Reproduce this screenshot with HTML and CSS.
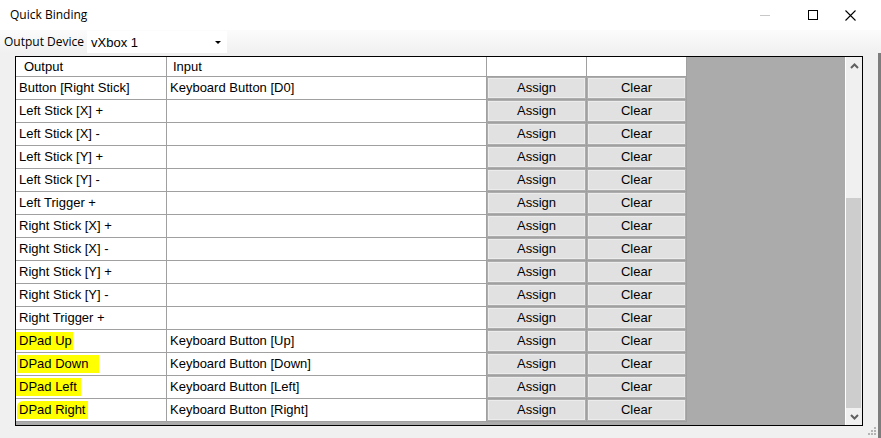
FILE: index.html
```html
<!DOCTYPE html>
<html>
<head>
<meta charset="utf-8">
<link rel="stylesheet" href="styles.css">
</head>
<body>
<div class="window">
  <div class="titlebar">
    <span class="title">Quick Binding</span>
    <div class="controls">
      <span class="ctl min"><span class="min-line"></span></span>
      <span class="ctl max"><span class="max-box"></span></span>
      <span class="ctl close">
        <svg width="11" height="11" viewBox="0 0 11 11"><path d="M0.5 0.5L10.5 10.5M10.5 0.5L0.5 10.5" stroke="#000" stroke-width="1.1" fill="none"/></svg>
      </span>
    </div>
  </div>
  <div class="toolbar">
    <span class="label">Output Device</span>
    <div class="combo"><span class="combo-text">vXbox 1</span><span class="combo-arrow"></span></div>
  </div>
  <div class="content">
    <div class="frame">
      <div class="view">
        <div class="grid">
          <div class="hd first">Output</div>
          <div class="hd">Input</div>
          <div class="hd"></div>
          <div class="hd"></div>

          <div class="cell">Button [Right Stick]</div><div class="cell">Keyboard Button [D0]</div><div class="bcell"><button class="btn">Assign</button></div><div class="bcell"><button class="btn">Clear</button></div>
          <div class="cell">Left Stick [X] +</div><div class="cell"></div><div class="bcell"><button class="btn">Assign</button></div><div class="bcell"><button class="btn">Clear</button></div>
          <div class="cell">Left Stick [X] -</div><div class="cell"></div><div class="bcell"><button class="btn">Assign</button></div><div class="bcell"><button class="btn">Clear</button></div>
          <div class="cell">Left Stick [Y] +</div><div class="cell"></div><div class="bcell"><button class="btn">Assign</button></div><div class="bcell"><button class="btn">Clear</button></div>
          <div class="cell">Left Stick [Y] -</div><div class="cell"></div><div class="bcell"><button class="btn">Assign</button></div><div class="bcell"><button class="btn">Clear</button></div>
          <div class="cell">Left Trigger +</div><div class="cell"></div><div class="bcell"><button class="btn">Assign</button></div><div class="bcell"><button class="btn">Clear</button></div>
          <div class="cell">Right Stick [X] +</div><div class="cell"></div><div class="bcell"><button class="btn">Assign</button></div><div class="bcell"><button class="btn">Clear</button></div>
          <div class="cell">Right Stick [X] -</div><div class="cell"></div><div class="bcell"><button class="btn">Assign</button></div><div class="bcell"><button class="btn">Clear</button></div>
          <div class="cell">Right Stick [Y] +</div><div class="cell"></div><div class="bcell"><button class="btn">Assign</button></div><div class="bcell"><button class="btn">Clear</button></div>
          <div class="cell">Right Stick [Y] -</div><div class="cell"></div><div class="bcell"><button class="btn">Assign</button></div><div class="bcell"><button class="btn">Clear</button></div>
          <div class="cell">Right Trigger +</div><div class="cell"></div><div class="bcell"><button class="btn">Assign</button></div><div class="bcell"><button class="btn">Clear</button></div>
          <div class="cell"><span class="hl hl-up">DPad Up</span></div><div class="cell">Keyboard Button [Up]</div><div class="bcell"><button class="btn">Assign</button></div><div class="bcell"><button class="btn">Clear</button></div>
          <div class="cell"><span class="hl hl-down">DPad Down</span></div><div class="cell">Keyboard Button [Down]</div><div class="bcell"><button class="btn">Assign</button></div><div class="bcell"><button class="btn">Clear</button></div>
          <div class="cell"><span class="hl hl-left">DPad Left</span></div><div class="cell">Keyboard Button [Left]</div><div class="bcell"><button class="btn">Assign</button></div><div class="bcell"><button class="btn">Clear</button></div>
          <div class="cell"><span class="hl hl-right">DPad Right</span></div><div class="cell">Keyboard Button [Right]</div><div class="bcell"><button class="btn">Assign</button></div><div class="bcell"><button class="btn">Clear</button></div>
        </div>
      </div>
      <div class="scrollbar">
        <div class="sb-btn">
          <svg width="9" height="6" viewBox="0 0 9 6"><path d="M1 5L4.5 1.5L8 5" stroke="#606060" stroke-width="2" fill="none"/></svg>
        </div>
        <div class="sb-track"><div class="sb-thumb"></div></div>
        <div class="sb-btn">
          <svg width="9" height="6" viewBox="0 0 9 6"><path d="M1 1L4.5 4.5L8 1" stroke="#606060" stroke-width="2" fill="none"/></svg>
        </div>
      </div>
    </div>
    <div class="footer">
      <svg class="grip" width="9" height="9" viewBox="0 0 9 9">
        <rect x="6" y="0" width="2" height="2" fill="#b4b4b4"/>
        <rect x="3" y="3" width="2" height="2" fill="#b4b4b4"/>
        <rect x="6" y="3" width="2" height="2" fill="#b4b4b4"/>
        <rect x="0" y="6" width="2" height="2" fill="#b4b4b4"/>
        <rect x="3" y="6" width="2" height="2" fill="#b4b4b4"/>
        <rect x="6" y="6" width="2" height="2" fill="#b4b4b4"/>
      </svg>
    </div>
  </div>
</div>
</body>
</html>
```
FILE: styles.css
```css
html, body {
  margin: 0;
  padding: 0;
  background: #f0f0f0;
}
body {
  width: 881px;
  height: 438px;
  overflow: hidden;
  font-family: "Liberation Sans", Arial, sans-serif;
  font-size: 13px;
  color: #000;
}
.window {
  display: flex;
  flex-direction: column;
  height: 438px;
}
.titlebar {
  height: 30px;
  background: #fff;
  display: flex;
  align-items: center;
  justify-content: space-between;
}
.title {
  font-family: "Open Sans", "Noto Sans", sans-serif;
  font-size: 12px;
  padding-left: 10px;
  margin-top: -1px;
}
.controls {
  display: flex;
  height: 30px;
  align-items: center;
}
.ctl {
  width: 46px;
  height: 30px;
  display: flex;
  align-items: center;
  justify-content: center;
}
.min-line {
  width: 10px;
  height: 1px;
  background: #c8c8c8;
  margin-left: 6px;
}
.max-box {
  width: 8px;
  height: 8px;
  border: 1px solid #000;
  margin-left: 10px;
}
.close {
  margin-left: 4px;
  margin-right: 16px;
  width: 30px;
}
.toolbar {
  height: 23px;
  display: flex;
  align-items: flex-start;
  background: linear-gradient(#fcfcfc, #f0f0f0);
}
.label {
  font-family: "Open Sans", "Noto Sans", sans-serif;
  font-size: 12px;
  padding-left: 4px;
  line-height: 22px;
  margin-top: 1px;
  width: 83px;
}
.combo {
  margin-top: 1px;
  width: 140px;
  height: 22px;
  background: #fff;
  display: flex;
  align-items: center;
  justify-content: space-between;
}
.combo-text {
  padding-left: 4px;
}
.combo-arrow {
  width: 0;
  height: 0;
  border-left: 3px solid transparent;
  border-right: 3px solid transparent;
  border-top: 3px solid #000;
  margin-right: 6px;
}
.content {
  flex: 1;
  border-right: 3px solid #7d7d7d;
  padding: 3px 0 0 15px;
  display: flex;
  flex-direction: column;
}
.frame {
  width: 846px;
  height: 368px;
  border: 1px solid #000;
  display: flex;
}
.view {
  flex: 1;
  background: #ababab;
  overflow: hidden;
}
.grid {
  display: grid;
  grid-template-columns: 150px 319px 99px 99px;
  grid-template-rows: 19px;
  grid-auto-rows: 22px;
  gap: 1px;
  padding: 0 1px 1px 0;
  background: #a0a0a0;
  width: max-content;
}
.hd {
  background: #fff;
  line-height: 19px;
  padding-left: 6px;
}
.hd.first {
  padding-left: 8px;
}
.cell {
  background: #fff;
  line-height: 22px;
  padding-left: 3px;
  white-space: nowrap;
}
.bcell {
  background: #fff;
  display: flex;
}
.btn {
  flex: 1;
  margin: 0;
  padding: 0;
  border: 1px solid #adadad;
  box-shadow: inset 0 0 0 1px #ececec;
  background: #e1e1e1;
  font-family: "Liberation Sans", Arial, sans-serif;
  font-size: 13px;
  color: #000;
  height: 22px;
  line-height: 20px;
}
.hl {
  display: inline-block;
  background: #ffff00;
  line-height: 18px;
}
.hl-up {
  margin-left: -5px;
  padding-left: 5px;
  padding-right: 1px;
}
.hl-down {
  margin-left: -2px;
  padding-left: 2px;
  padding-right: 11px;
}
.hl-left {
  margin-left: -9px;
  padding-left: 9px;
  padding-right: 4px;
  border-bottom-left-radius: 4px;
}
.hl-right {
  margin-left: -2px;
  padding-left: 2px;
  padding-right: 3px;
  border-top-left-radius: 6px 6px;
}
.scrollbar {
  width: 16px;
  border-left: 1px solid #fff;
  background: #f0f0f0;
  display: flex;
  flex-direction: column;
}
.sb-btn {
  height: 17px;
  display: flex;
  align-items: center;
  justify-content: center;
}
.sb-track {
  flex: 1;
  display: flex;
  flex-direction: column;
  justify-content: flex-end;
}
.sb-thumb {
  height: 210px;
  width: 15px;
  background: #cdcdcd;
}
.footer {
  flex: 1;
  display: flex;
  justify-content: flex-end;
  align-items: flex-end;
  padding: 0 1px 2px 0;
}
.grip {
  display: block;
}
```
